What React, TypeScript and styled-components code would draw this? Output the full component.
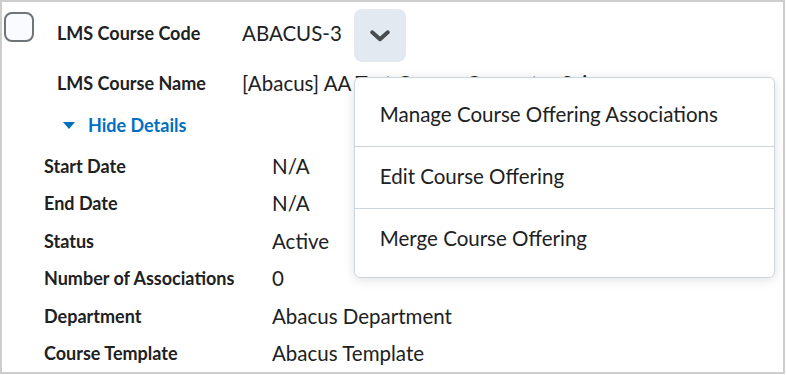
import React from 'react';
import styled, { createGlobalStyle } from 'styled-components';

const GlobalStyle = createGlobalStyle`
  html, body {
    margin: 0;
    padding: 0;
    background: #ffffff;
  }
  body {
    font-family: Lato, "Open Sans", Arial, sans-serif;
    color: #202122;
  }
`;

const menuItems = [
    'Manage Course Offering Associations',
    'Edit Course Offering',
    'Merge Course Offering',
];

const details = [
    { label: 'Start Date', value: 'N/A' },
    { label: 'End Date', value: 'N/A' },
    { label: 'Status', value: 'Active' },
    { label: 'Number of Associations', value: '0' },
    { label: 'Department', value: 'Abacus Department' },
    { label: 'Course Template', value: 'Abacus Template' },
];

const App: React.FC = () => {
    return <>
        <GlobalStyle />
        <Card>
            <Header>
                <Checkbox />
                <HeaderBody>
                    <HeaderRow>
                        <Label>LMS Course Code</Label>
                        <ValueCell>
                            <Value>ABACUS-3</Value>
                            <Dropdown>
                                <MenuButton aria-label='Actions'>
                                    <svg width='20' height='12' viewBox='0 0 20 12'>
                                        <path d='M2.2 2.2 L10 9.3 L17.8 2.2' fill='none' stroke='#494c4e'
                                            strokeWidth='3.9' strokeLinecap='round' strokeLinejoin='round' />
                                    </svg>
                                </MenuButton>
                                <Menu>
                                    {menuItems.map(e => <MenuItem key={e}>{e}</MenuItem>)}
                                </Menu>
                            </Dropdown>
                        </ValueCell>
                    </HeaderRow>
                    <NameRow>
                        <Label>LMS Course Name</Label>
                        <Value>[Abacus] AA Test Course Computer Science</Value>
                    </NameRow>
                    <Toggle>
                        <Caret />
                        Hide Details
                    </Toggle>
                </HeaderBody>
            </Header>
            <Details>
                {details.map(e => <React.Fragment key={e.label}>
                    <Label>{e.label}</Label>
                    <Value>{e.value}</Value>
                </React.Fragment>)}
            </Details>
        </Card>
    </>
}

const Card = styled.div`
    box-sizing: border-box;
    width: 785px;
    height: 374px;
    border: 2px solid #cdcdcd;
    background: #fff;
    overflow: hidden;
`

const Header = styled.div`
    display: flex;
    align-items: flex-start;
    gap: 23px;
    padding: 7px 0 0 2px;
`

const Checkbox = styled.div`
    box-sizing: border-box;
    flex: none;
    width: 30px;
    height: 30px;
    margin-top: 3px;
    border: 2px solid #6e7477;
    border-radius: 8px;
    background: #f9fbff;
`

const HeaderBody = styled.div`
    display: flex;
    flex-direction: column;
`

const Label = styled.div`
    font-size: 18px;
    line-height: 24px;
    font-weight: 700;
    color: #202122;
    white-space: nowrap;
`

const Value = styled.div`
    font-size: 20.5px;
    line-height: 24px;
    color: #202122;
    white-space: nowrap;
`

const HeaderRow = styled.div`
    display: grid;
    grid-template-columns: 185px auto;
    align-items: start;
    height: 53px;

    ${Label}, ${Value} {
        padding-top: 12px;
    }
`

const NameRow = styled.div`
    display: grid;
    grid-template-columns: 185px auto;
    align-items: center;
    height: 24px;
    margin-top: 9px;
    white-space: nowrap;
`

const ValueCell = styled.div`
    display: flex;
    align-items: flex-start;
    gap: 12px;
`

const Dropdown = styled.div`
    position: relative;
`

const MenuButton = styled.button`
    display: flex;
    align-items: center;
    justify-content: center;
    width: 52px;
    height: 53px;
    padding: 0;
    border: none;
    border-radius: 8px;
    background: #e3e9f1;
    cursor: pointer;
`

const Menu = styled.div`
    position: absolute;
    z-index: 2;
    left: 0;
    top: calc(100% + 15px);
    box-sizing: border-box;
    width: 421px;
    padding: 7px 0;
    border: 1px solid #cdd5dc;
    border-radius: 6px;
    background: #fff;
    box-shadow: 0 2px 12px rgba(0, 0, 0, 0.12);
`

const MenuItem = styled.div`
    box-sizing: border-box;
    display: flex;
    align-items: center;
    height: 62px;
    padding: 0 25px 4px;
    font-size: 20.5px;
    color: #202122;
    white-space: nowrap;
    border-bottom: 1px solid #cdd5dc;

    &:last-child {
        height: 61px;
        border-bottom: none;
    }
`

const Toggle = styled.div`
    display: flex;
    align-items: center;
    gap: 13px;
    height: 24px;
    margin: 18px 0 0 6px;
    font-size: 18px;
    font-weight: 700;
    color: #006fbf;
`

const Caret = styled.span`
    width: 0;
    height: 0;
    border-left: 6.5px solid transparent;
    border-right: 6.5px solid transparent;
    border-top: 7px solid #006fbf;
`

const Details = styled.div`
    display: grid;
    grid-template-columns: 228px auto;
    grid-auto-rows: 37.5px;
    align-items: center;
    margin-top: 10px;
    padding-left: 42px;
`

export default App;
